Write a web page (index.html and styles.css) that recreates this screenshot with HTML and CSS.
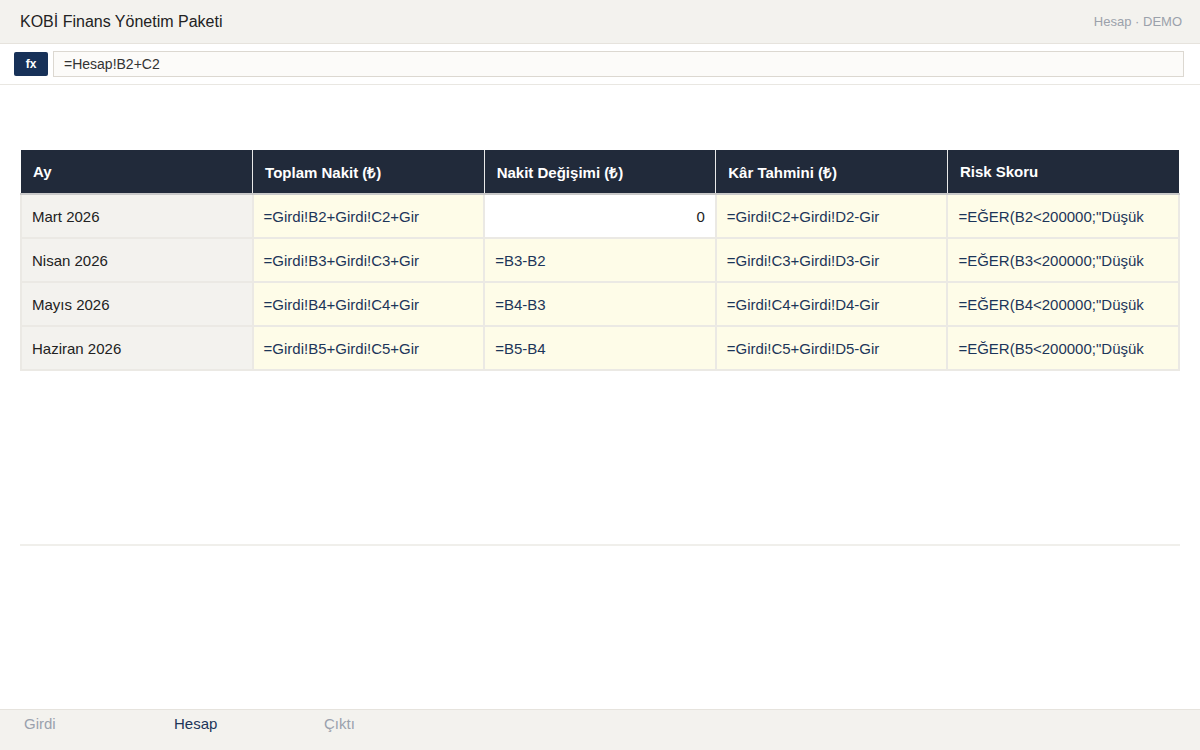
FILE: index.html
```html
<!DOCTYPE html>
<html lang="tr">

<head>
    <meta charset="UTF-8">
    <meta name="viewport" content="width=device-width, initial-scale=1.0">
    <title>KOBİ Finans Yönetim Paketi</title>
    <link rel="stylesheet" href="styles.css">
</head>

<body>
    <div class="app">
        <div class="topbar">
            <span class="app-title">KOBİ Finans Yönetim Paketi</span>
            <span class="sheet-info">Hesap · DEMO</span>
        </div>

        <div class="formula-bar">
            <span class="fx-btn">fx</span>
            <div class="formula-input">=Hesap!B2+C2</div>
        </div>

        <div class="sheet-area">
            <table class="sheet">
                <thead>
                    <tr>
                        <th>Ay</th>
                        <th>Toplam Nakit (₺)</th>
                        <th>Nakit Değişimi (₺)</th>
                        <th>Kâr Tahmini (₺)</th>
                        <th>Risk Skoru</th>
                    </tr>
                </thead>
                <tbody>
                    <tr>
                        <td class="label">Mart 2026</td>
                        <td class="formula">=Girdi!B2+Girdi!C2+Gir</td>
                        <td class="value">0</td>
                        <td class="formula">=Girdi!C2+Girdi!D2-Gir</td>
                        <td class="formula">=EĞER(B2&lt;200000;"Düşük</td>
                    </tr>
                    <tr>
                        <td class="label">Nisan 2026</td>
                        <td class="formula">=Girdi!B3+Girdi!C3+Gir</td>
                        <td class="formula">=B3-B2</td>
                        <td class="formula">=Girdi!C3+Girdi!D3-Gir</td>
                        <td class="formula">=EĞER(B3&lt;200000;"Düşük</td>
                    </tr>
                    <tr>
                        <td class="label">Mayıs 2026</td>
                        <td class="formula">=Girdi!B4+Girdi!C4+Gir</td>
                        <td class="formula">=B4-B3</td>
                        <td class="formula">=Girdi!C4+Girdi!D4-Gir</td>
                        <td class="formula">=EĞER(B4&lt;200000;"Düşük</td>
                    </tr>
                    <tr>
                        <td class="label">Haziran 2026</td>
                        <td class="formula">=Girdi!B5+Girdi!C5+Gir</td>
                        <td class="formula">=B5-B4</td>
                        <td class="formula">=Girdi!C5+Girdi!D5-Gir</td>
                        <td class="formula">=EĞER(B5&lt;200000;"Düşük</td>
                    </tr>
                </tbody>
            </table>

            <div class="divider"></div>
        </div>

        <div class="tabs">
            <span class="tab">Girdi</span>
            <span class="tab active">Hesap</span>
            <span class="tab">Çıktı</span>
        </div>
    </div>
</body>

</html>
```

FILE: styles.css
```css
body {
    font-family: 'Liberation Sans', Arial, sans-serif;
    margin: 0;
    padding: 0;
    background-color: #fff;
    color: #222;
}

.app {
    display: flex;
    flex-direction: column;
    height: 100vh;
}

.topbar {
    height: 43px;
    display: flex;
    align-items: center;
    justify-content: space-between;
    padding: 0 18px 0 20px;
    background-color: #f3f2ee;
    border-bottom: 1px solid #e6e3dd;
}

.app-title {
    font-size: 16px;
    color: #222;
}

.sheet-info {
    font-size: 13px;
    color: #9ba1ab;
}

.formula-bar {
    height: 40px;
    display: flex;
    align-items: center;
    gap: 5px;
    padding: 0 16px 0 14px;
    border-bottom: 1px solid #e9e7e2;
}

.fx-btn {
    width: 34px;
    height: 24px;
    line-height: 24px;
    text-align: center;
    background-color: #173158;
    color: #fff;
    font-size: 12px;
    font-weight: bold;
    border-radius: 2px;
}

.formula-input {
    flex: 1;
    height: 24px;
    line-height: 24px;
    padding: 0 10px;
    font-size: 14px;
    color: #333;
    background-color: #fcfbf9;
    border: 1px solid #dcd8d1;
}

.sheet-area {
    padding: 65px 20px 0;
}

.sheet {
    width: 100%;
    border-collapse: collapse;
    table-layout: fixed;
    font-size: 15px;
}

.sheet th {
    height: 43px;
    padding: 0 12px;
    text-align: left;
    font-size: 15px;
    font-weight: bold;
    color: #fff;
    background-color: #212a3a;
    border-right: 1px solid #e9e9e9;
    border-bottom: 2px solid #c9c9c9;
}

.sheet th:last-child {
    border-right: none;
}

.sheet td {
    height: 42px;
    padding: 0 10px;
    border: 2px solid #ebe9e4;
    white-space: nowrap;
    overflow: hidden;
}

.sheet td.label {
    background-color: #f3f2ee;
    color: #222;
}

.sheet td.formula {
    background-color: #fefce8;
    color: #1c3559;
}

.sheet td.value {
    background-color: #fff;
    color: #222;
    text-align: right;
}

.divider {
    height: 2px;
    background-color: #f0efeb;
    margin-top: 173px;
}

.tabs {
    margin-top: auto;
    height: 40px;
    display: flex;
    padding-left: 24px;
    background-color: #f3f2ee;
    border-top: 1px solid #e6e3dd;
}

.tab {
    width: 150px;
    padding-top: 5px;
    font-size: 15px;
    color: #9aa1ad;
}

.tab.active {
    color: #1c3559;
}
```
